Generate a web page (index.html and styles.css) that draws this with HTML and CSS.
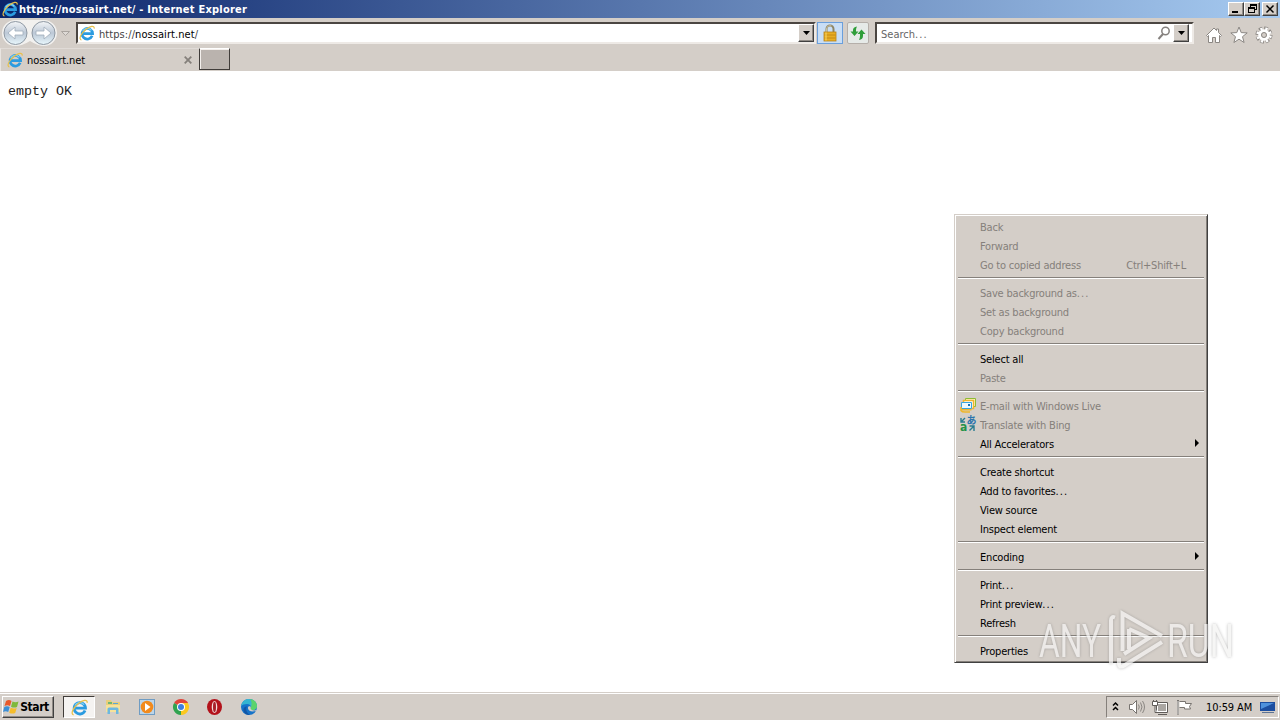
FILE: index.html
```html
<!DOCTYPE html>
<html lang="en">
<head>
    <meta charset="UTF-8">
    <title>https://nossairt.net/ - Internet Explorer</title>
    <link rel="stylesheet" href="styles.css">
</head>
<body>
    <svg class="sprite" width="0" height="0">
        <symbol id="ie" viewBox="0 0 16 16">
            <path d="M13.200 10.800A5.300 5.300 0 1 1 13.600 8.600H4.500" fill="none" stroke="#2b9be0" stroke-width="2.700"/>
            <path d="M3.600 6.200A5.200 5.200 0 0 1 12.400 5.400" fill="none" stroke="#7fd0f5" stroke-width="1.200"/>
            <path d="M2.500 15C-.8 14.200 2 8.300 6.800 4.500 11 1.200 15.600-.2 15.200 3.600" fill="none" stroke="#e8c04a" stroke-width="1.200"/>
        </symbol>
    </svg>

    <div class="titlebar">
        <svg class="icon-app" width="16" height="16"><use href="#ie"/></svg>
        <span class="title">https://nossairt.net/ - Internet Explorer</span>
        <div class="window-buttons">
            <button class="win-btn"><svg width="12" height="10"><path d="M2 7h6v2H2z"/></svg></button>
            <button class="win-btn"><svg width="12" height="10"><path d="M4 0h7v6H9V5h1V2H5v1H4zM2 3h7v6H2zM3 5v3h5V5z" fill-rule="evenodd"/></svg></button>
            <button class="win-btn close"><svg width="12" height="10"><path d="M2.500 1.500l7 7M9.500 1.500l-7 7" stroke="#000" stroke-width="1.500"/></svg></button>
        </div>
    </div>

    <div class="navbar">
        <svg class="nav-arrows" width="76" height="29" viewBox="0 0 76 29">
            <defs>
                <linearGradient id="ball" x2="0" y2="1">
                    <stop offset="0" stop-color="#f4f6f8"/>
                    <stop offset=".5" stop-color="#bcc8d6"/>
                    <stop offset="1" stop-color="#e8f7fc"/>
                </linearGradient>
            </defs>
            <path d="M15 2h29a13 13 0 0 1 0 26q-6 0-14-5-8 5-15 5a13 13 0 0 1 0-26z" fill="#f2f1ef"/>
            <circle cx="15.500" cy="15" r="11.500" fill="url(#ball)" stroke="#8e98a3"/>
            <circle cx="43.500" cy="15" r="11.500" fill="url(#ball)" stroke="#8e98a3"/>
            <path d="M8 15l7-6v4h8v4h-8v4z" fill="#fff" stroke="#9eacba" stroke-width=".8"/>
            <path d="M51 15l-7-6v4h-8v4h8v4z" fill="#fff" stroke="#9eacba" stroke-width=".8"/>
            <path d="M61.500 13.500h8l-4 4z" fill="#dedad6" stroke="#aaa5a0"/>
        </svg>
        <div class="field address">
            <svg width="16" height="16"><use href="#ie"/></svg>
            <span class="url"><i>https://</i>nossairt.net<i>/</i></span>
            <button class="drop"><svg width="7" height="4"><path d="M0 0h7L3.500 4z"/></svg></button>
        </div>
        <div class="lock">
            <svg width="16" height="18" viewBox="0 0 16 18">
                <path d="M4.500 9V5a3.500 3.500 0 0 1 7 0v4" fill="none" stroke="#8e8564" stroke-width="2"/>
                <path d="M4.500 8V5a3.500 3.500 0 0 1 5-3" fill="none" stroke="#d8d0ae" stroke-width=".8"/>
                <rect x="2" y="8" width="12" height="9" fill="#e8ad23" stroke="#b98216" stroke-width=".8"/>
                <path d="M2.500 11h11M2.500 14h11" stroke="#c48a15"/>
                <path d="M4 8.500v8" stroke="#f9d768"/>
            </svg>
        </div>
        <div class="refresh">
            <svg width="18" height="18" viewBox="0 0 18 18">
                <path d="M8 2.500Q4 3 4 6v1.500H1.500L5.500 12l4-4.500H7V6q0-2 1-3.500zM10 16q4-.5 4-4v-2h2.500l-4-4.500-4 4.500H11v2q0 2-1 4z" fill="#2f9e3a"/>
            </svg>
        </div>
        <div class="field search">
            <span>Search<i class="dots">...</i></span>
            <svg class="glass" width="14" height="14" viewBox="0 0 14 14"><circle cx="8.500" cy="5" r="3.700" fill="#fff" stroke="#85817e" stroke-width="1.500"/><path d="M6 8l-4.500 5" stroke="#85817e" stroke-width="2"/></svg>
            <button class="drop"><svg width="7" height="4"><path d="M0 0h7L3.500 4z"/></svg></button>
        </div>
        <div class="tools">
            <svg width="18" height="18" viewBox="0 0 18 18"><path d="M1.500 9.500L9 2l2.500 2.500V3h2v3.500l3 3-1 1-1-1v7h-4v-5h-3v5h-4v-7l-1 1z" fill="#fff" stroke="#8b8783"/></svg>
            <svg width="18" height="18" viewBox="0 0 18 18"><path d="M9 1l2.200 5.600 6 .3-4.700 3.800 1.600 5.800L9 13.200l-5.100 3.300 1.600-5.800L.8 6.900l6-.3z" fill="#fff" stroke="#8b8783"/></svg>
            <svg width="18" height="18" viewBox="0 0 18 18">
                <circle cx="9" cy="9" r="6.800" fill="none" stroke="#8b8783" stroke-width="3.400" stroke-dasharray="3.600 1.740"/>
                <circle cx="9" cy="9" r="6.400" fill="none" stroke="#fff" stroke-width="2.800" stroke-dasharray="2.200 2.826" stroke-dashoffset="-.6"/>
                <circle cx="9" cy="9" r="4.300" fill="#d4cec8" stroke="#fff" stroke-width="3"/>
                <circle cx="9" cy="9" r="2.500" fill="#d4cec8" stroke="#8b8783"/>
            </svg>
        </div>
    </div>

    <div class="tabs">
        <div class="tab">
            <svg width="16" height="16"><use href="#ie"/></svg>
            <span>nossairt.net</span>
            <svg class="tab-close" width="8" height="8"><path d="M.7.7l6.600 6.600M7.300.7L.7 7.300" stroke="#85807b" stroke-width="1.800"/></svg>
        </div>
        <div class="new-tab"></div>
    </div>

    <main class="page">
        <pre>empty OK</pre>
    </main>

    <footer class="taskbar">
        <button class="start">
            <svg width="17" height="16" viewBox="0 0 17 16">
                <path d="M3 2q3-2 5.500 0L7 7Q4.500 5.500 1.500 7z" fill="#e9592b"/>
                <path d="M9.500 2.500q3 1.500 6 0L14 8q-3 1.300-6-.3z" fill="#7fb93c"/>
                <path d="M1.300 8Q4 6.500 6.700 8l-1.500 5q-2.500-1.500-5.200 0z" fill="#3c8fd6"/>
                <path d="M7.700 8.700q3 1.500 6 .2l-1.500 5q-3 1.500-6-.2z" fill="#f5bd2c"/>
            </svg>
            <span>Start</span>
        </button>
        <div class="task active"><svg width="17" height="17"><use href="#ie"/></svg></div>
        <div class="task">
            <svg width="18" height="18" viewBox="0 0 18 18">
                <path d="M2 2h5l1 2h8v10H2z" fill="#e9cf7c"/>
                <path d="M4 4h4v2H4z" fill="#6fb774"/>
                <path d="M9 5h5v1H9z" fill="#5aa5d8"/>
                <path d="M2 7h14v7H2z" fill="#f6e29a"/>
                <path d="M3.500 16v-5q0-1.500 1.500-1.500h8q1.500 0 1.500 1.500v5h-2.500v-4H6v4z" fill="#6db8df"/>
            </svg>
        </div>
        <div class="task">
            <svg width="18" height="18" viewBox="0 0 18 18">
                <rect x="1.500" y="1.500" width="15" height="15" fill="#bcd5e9" stroke="#6f9cc3"/>
                <circle cx="9" cy="9" r="6.300" fill="#f28a1c"/>
                <path d="M7 5l5.500 4L7 13z" fill="#fff"/>
            </svg>
        </div>
        <div class="task">
            <svg width="18" height="18" viewBox="0 0 18 18">
                <path d="M9 9L2.070 5A8 8 0 0 1 15.930 5z" fill="#e0443a"/>
                <path d="M9 9l6.930-4A8 8 0 0 1 9 17z" fill="#fbc81f"/>
                <path d="M9 9v8A8 8 0 0 1 2.070 5z" fill="#31a350"/>
                <path d="M9 5h6.930L12.500 11z" fill="#fbc81f"/>
                <path d="M9 5h6.930L14 3H9z" fill="#e0443a"/>
                <circle cx="9" cy="9" r="4" fill="#fff"/>
                <circle cx="9" cy="9" r="3" fill="#3d7fe0"/>
            </svg>
        </div>
        <div class="task">
            <svg width="18" height="18" viewBox="0 0 18 18">
                <ellipse cx="8.500" cy="9" rx="7.500" ry="8" fill="#b3121b"/>
                <ellipse cx="8.500" cy="9" rx="2.800" ry="6" fill="#f3dddd"/>
                <ellipse cx="8.500" cy="9" rx="1.500" ry="5.200" fill="#a8202a"/>
            </svg>
        </div>
        <div class="task">
            <svg width="18" height="18" viewBox="0 0 18 18">
                <circle cx="9" cy="9" r="8" fill="#1673c9"/>
                <path d="M1.200 8C2 3.500 5 1 9 1c5 0 8 3.500 8 7 0 2.500-2 4-4 4s-3.500-1-2.500-2c.8-1.500 0-4-3.500-4-2.500 0-4.800.8-5.800 2z" fill="#35b5d1"/>
                <path d="M10 1c4.500.5 7 3.500 7 7 0 2.500-2 4-4 4s-3.500-1-2.500-2c2-4 1-7-.5-9z" fill="#5bd36c"/>
                <path d="M7 8.500C5.500 10 6 15 10 16.800 5.500 17.500 3 14 3.500 11 4 9 5.500 8.200 7 8.500z" fill="#1256a6"/>
                <path d="M10.500 10c.8-1-.5-2.500-2-1.500-1.500 1.500 0 5 4.500 5 2 0 3-.7 3.500-1.500-3 1-6 0-6-2z" fill="#d4cec8"/>
            </svg>
        </div>
        <div class="tray">
            <svg class="chevrons" width="7" height="10" viewBox="0 0 7 10"><path d="M1 3.500l2.500-2.500L6 3.500M1 8l2.500-2.500L6 8" fill="none" stroke="#000" stroke-width="1.500"/></svg>
            <svg width="18" height="16" viewBox="0 0 18 16">
                <path d="M1.500 5.500h3l4-4v13l-4-4h-3z" fill="#fff" stroke="#77736f"/>
                <path d="M10.500 5.500q1.500 2.500 0 5M12.500 3.500q3 4.500 0 9M14.500 2q4 6 0 12" fill="none" stroke="#8a8682"/>
            </svg>
            <svg width="18" height="16" viewBox="0 0 18 16">
                <path d="M4.500 3.500h11v10h-11z" fill="#fff" stroke="#605c59"/>
                <path d="M6 5h8v7H6z" fill="#aaa6a2"/>
                <path d="M6 15.500h9" stroke="#605c59"/>
                <path d="M1.500 1v2M4.500 1v2M.5 2.500h5v4h-5zM3 7v6.500h2" fill="#fff" stroke="#605c59"/>
            </svg>
            <svg width="18" height="16" viewBox="0 0 18 16">
                <path d="M3.500 2.500h6v2h6l-2 3 1 2.500h-6V8.500h-5" fill="#fff" stroke="#77736f"/>
                <path d="M2 1v14.500" stroke="#77736f" stroke-width="2"/><path d="M2 2v13" stroke="#fff" stroke-width=".8"/>
            </svg>
            <span class="clock">10:59 AM</span>
            <svg class="desk" width="16" height="14" viewBox="0 0 16 14"><path d="M1 2h15v9H1z" fill="#1c4ea0"/><path d="M2 3h13L2 9z" fill="#4e91dc"/><path d="M3 12h12v1H3z" fill="#5d7394"/></svg>
        </div>
    </footer>

    <div class="context-menu">
        <div class="item disabled">Back</div>
        <div class="item disabled">Forward</div>
        <div class="item disabled">Go to copied address<span class="shortcut">Ctrl+Shift+L</span></div>
        <hr>
        <div class="item disabled">Save background as<i class="dots">...</i></div>
        <div class="item disabled">Set as background</div>
        <div class="item disabled">Copy background</div>
        <hr>
        <div class="item">Select all</div>
        <div class="item disabled">Paste</div>
        <hr>
        <div class="item disabled">
            <svg class="item-icon" width="16" height="16" viewBox="0 0 16 16">
                <path d="M5.500 1.500h10v8h-10z" fill="#fff4bb" stroke="#8dbb35"/>
                <path d="M3.500 3.500h10v8h-10z" fill="#fff" stroke="#f0b52b" stroke-width="1.500"/>
                <path d="M2 7v5.500h9.500" fill="none" stroke="#f0b52b" stroke-width="1.800"/>
                <path d="M1.500 5.500h10v6h-10z" fill="#edf8fd" stroke="#39a4dc"/>
                <path d="M8 7h2v2H8z" fill="#1673b6"/><path d="M1 10v3.500q1 1.500 4 1.500h5" fill="none" stroke="#efb62a" stroke-width="1.500"/>
            </svg>
            E-mail with Windows Live
        </div>
        <div class="item disabled">
            <svg class="item-icon" width="16" height="16" viewBox="0 0 16 16">
                <text x="6.500" y="8" font-size="10" font-weight="bold" fill="#2b74ad">あ</text>
                <text x="0" y="15" font-size="12" font-weight="bold" fill="#249247">a</text>
                <path d="M1 2v4h4M1.500 5.500L5 2M9.500 14.500l4-4M9.500 10H14v5" fill="none" stroke="#287b90" stroke-width="1.400"/>
            </svg>
            Translate with Bing
        </div>
        <div class="item">All Accelerators<span class="arrow"></span></div>
        <hr>
        <div class="item">Create shortcut</div>
        <div class="item">Add to favorites<i class="dots">...</i></div>
        <div class="item">View source</div>
        <div class="item">Inspect element</div>
        <hr>
        <div class="item">Encoding<span class="arrow"></span></div>
        <hr>
        <div class="item">Print<i class="dots">...</i></div>
        <div class="item">Print preview<i class="dots">...</i></div>
        <div class="item">Refresh</div>
        <hr>
        <div class="item">Properties</div>
    </div>

    <svg class="watermark" width="210" height="72" viewBox="0 0 210 72">
        <text x="4" y="50" textLength="62" lengthAdjust="spacingAndGlyphs">ANY</text>
        <text x="132" y="50" textLength="67" lengthAdjust="spacingAndGlyphs">RUN</text>
        <path d="M87.500 44V6.500L127 29M94 22v20M94 22l20 9-25 16M80 10.500q-4-1.500-4 3v43M127 35L90 58q-6 4-6-2v-5" fill="none"/>
    </svg>
</body>
</html>
```
FILE: styles.css
```css
* {
    box-sizing: border-box;
}

body {
    margin: 0;
    width: 1280px;
    height: 720px;
    display: flex;
    flex-direction: column;
    overflow: hidden;
    background: #fff;
    font: 11px "DejaVu Sans Condensed", "DejaVu Sans", "Noto Sans CJK JP", sans-serif;
    font-stretch: condensed;
    letter-spacing: -0.2px;
    color: #000;
}

svg {
    display: block;
    flex: none;
    overflow: visible;
}

.sprite {
    position: absolute;
}

button {
    font: inherit;
    padding: 0;
    background: #d4cec8;
    border: 1px solid;
    border-color: #fff #404040 #404040 #fff;
    box-shadow: inset -1px -1px #908b86;
    display: flex;
    align-items: center;
    justify-content: center;
}

.titlebar {
    height: 18px;
    display: flex;
    align-items: center;
    padding: 0 2px;
    background: linear-gradient(to right, #0a246a, #a6caf0);
    color: #fff;
}

.title {
    margin-left: 1px;
    font-weight: bold;
    letter-spacing: 0.23px;
    white-space: nowrap;
}

.window-buttons {
    display: flex;
    margin-left: auto;
}

.win-btn {
    width: 16px;
    height: 14px;
}

.close {
    margin-left: 2px;
}

.navbar {
    height: 30px;
    display: flex;
    align-items: flex-start;
    background: #d4cec8;
}

.field {
    height: 22px;
    margin-top: 4px;
    display: flex;
    align-items: center;
    background: #fff;
    border: 2px solid;
    border-color: #4b4642 #eeeae6 #eeeae6 #4b4642;
}

.address {
    width: 740px;
    padding-left: 1px;
}

.url {
    margin: 2px 0 0 4px;
    letter-spacing: 0.07px;
}

.url i {
    font-style: normal;
    color: #444;
}

.dots {
    font-style: normal;
    letter-spacing: 1.1px;
}

.drop {
    width: 16px;
    height: 18px;
    margin-left: auto;
}

.lock,
.refresh {
    height: 22px;
    margin-top: 4px;
    display: flex;
    align-items: center;
    justify-content: center;
}

.lock {
    width: 26px;
    margin-left: 1px;
    background: #c9def5;
    border: 1px solid #6a9fdc;
}

.refresh {
    width: 22px;
    margin-left: 4px;
    background: #e6eae8;
    border: 1px solid #b5afaa;
    border-radius: 2px;
}

.search {
    width: 319px;
    margin-left: 6px;
    padding: 0 3px 0 4px;
    color: #666;
}

.search span {
    margin-top: 2px;
    letter-spacing: 0;
}

.glass {
    margin-left: auto;
}

.search .drop {
    margin-left: 2px;
}

.tools {
    display: flex;
    gap: 7px;
    margin: 8px 0 0 11px;
}

.tabs {
    height: 23px;
    display: flex;
    background: #d4cec8;
}

.tab {
    width: 199px;
    display: flex;
    align-items: center;
    padding: 0 7px 0 6px;
    border-left: 1px solid #e9e5e1;
    border-top: 1px solid #e0dbd7;
}

.tab span {
    margin: 1px 0 0 4px;
    letter-spacing: -0.05px;
}

.tab-close {
    margin-left: auto;
}

.new-tab {
    width: 31px;
    height: 22px;
    background: #bab3ae;
    border: 1px solid #403c39;
    border-top-color: #fff;
    box-shadow: inset 1px 1px #f4f0ed;
}

.page {
    flex: 1;
    padding: 13px 8px;
}

pre {
    margin: 0;
    font: 13.33px/15px "Liberation Mono", monospace;
    letter-spacing: 0;
    color: #222;
}

.taskbar {
    height: 28px;
    display: flex;
    align-items: flex-start;
    background: #d4cec8;
    border-top: 1px solid #d4cec8;
    box-shadow: inset 0 1px #fff;
}

.start {
    width: 52px;
    height: 22px;
    margin: 3px 8px 0 2px;
    padding-right: 4px;
    font-size: 12px;
    font-weight: bold;
    letter-spacing: -0.4px;
}

.task {
    width: 34px;
    height: 23px;
    margin-top: 2px;
    display: flex;
    align-items: center;
    justify-content: center;
}

.active {
    width: 32px;
    margin: 3px 1px 0;
    height: 22px;
    background: #f5f3f1;
    border: 1px solid;
    border-color: #403c39 #fff #fff #403c39;
}

.tray {
    width: 173px;
    height: 22px;
    margin: 3px 1px 0 auto;
    padding-left: 5px;
    display: flex;
    align-items: center;
    border: 1px solid;
    border-color: #85807b #fff #fff #85807b;
}

.tray svg {
    margin-right: 6px;
}

.tray .chevrons {
    margin-right: 9px;
}

.clock {
    width: 47px;
    margin: 0 7px 0 6px;
    letter-spacing: -0.1px;
    white-space: nowrap;
}

.context-menu {
    position: absolute;
    left: 954px;
    top: 214px;
    width: 254px;
    height: 449px;
    padding: 2px;
    background: #d4cec8;
    border: 1px solid;
    border-color: #d4cec8 #404040 #404040 #d4cec8;
    box-shadow: inset 1px 1px #fff, inset -1px -1px #85807b;
}

.item {
    height: 19px;
    padding: 2px 0 0 23px;
    display: flex;
    align-items: center;
    position: relative;
    line-height: 17px;
    white-space: nowrap;
}

.disabled {
    color: #85807b;
}

.item-icon {
    position: absolute;
    left: 3px;
    top: 1px;
}

.shortcut {
    margin-left: auto;
    padding-right: 19px;
}

.arrow {
    margin: 0 6px 4px auto;
    border: 4px solid transparent;
    border-left-color: #000;
    border-right: 0;
}

hr {
    height: 2px;
    margin: 3px 1px 4px;
    border: 0;
    border-top: 1px solid #85807b;
    border-bottom: 1px solid #fff;
}

.watermark {
    position: absolute;
    left: 1035px;
    top: 607px;
    opacity: 0.75;
    filter: drop-shadow(0 0 1.5px rgba(110, 110, 110, 0.6));
    font: 400 46px Roboto, sans-serif;
    letter-spacing: 0;
    fill: #f4f3f2;
}

.watermark path {
    stroke: #f4f3f2;
    stroke-width: 4;
}
```
